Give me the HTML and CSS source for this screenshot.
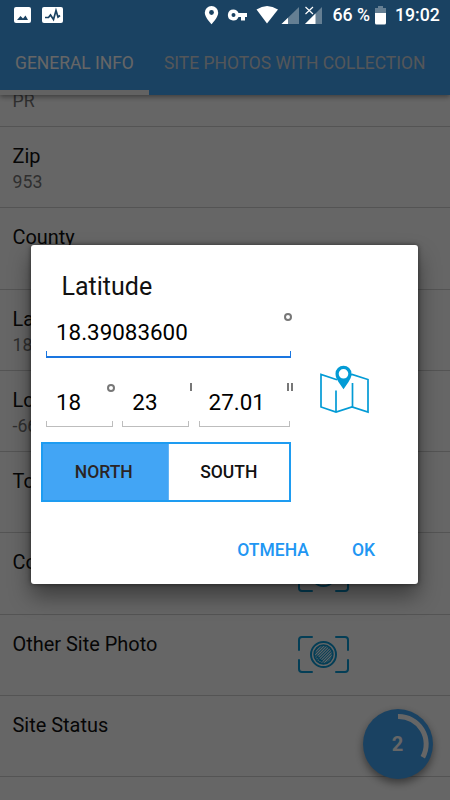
FILE: index.html
```html
<!DOCTYPE html>
<html lang="en">
<head>
<meta charset="utf-8">
<title>General info</title>
<link rel="stylesheet" href="styles.css">
</head>
<body>
<div class="screen">
  <header class="appbar">
    <nav class="tabs">
      <div class="tab active"><span>GENERAL INFO</span></div>
      <div class="tab"><span>SITE PHOTOS WITH COLLECTION</span></div>
    </nav>
  </header>
  <main class="list">
    <section class="row first"><p>PR</p></section>
    <section class="row"><h3>Zip</h3><p>953</p></section>
    <section class="row"><h3>County</h3></section>
    <section class="row"><h3>La</h3><p>18</p></section>
    <section class="row"><h3>Lo</h3><p>-66</p></section>
    <section class="row"><h3>To</h3></section>
    <section class="row photo"><h3>Co</h3>
      <svg class="camera" viewBox="0 0 52 38"><use href="#cam"/></svg></section>
    <section class="row photo"><h3>Other Site Photo</h3>
      <svg class="camera" viewBox="0 0 52 38">
        <defs><pattern id="hatch" width="2" height="2" patternUnits="userSpaceOnUse" patternTransform="rotate(45)"><path d="M.5 0V2" stroke="#0a9bd8" stroke-width="1"/></pattern></defs>
        <g id="cam" fill="none" stroke="#0a9bd8" stroke-width="2" stroke-linecap="round">
          <path d="M1 14V4q0-3 3-3H14M38 1H47q3 0 3 3V14M50 24V33q0 3-3 3H38M14 36H4q-3 0-3-3V24"/>
          <circle cx="25.5" cy="18.5" r="12.5"/>
          <circle cx="25.5" cy="18.5" r="9.3" fill="url(#hatch)" stroke-width="1.8"/>
          <path d="M19 20q2 4 5 5" stroke-width="1.5"/>
        </g>
      </svg></section>
    <section class="row"><h3>Site Status</h3></section>
    <section class="row last"><h3>Structure Type</h3></section>
  </main>
  <div class="fab"><span>2</span>
    <svg viewBox="0 0 70 70"><path d="M35 7.5A27.5 27.5 0 0 1 59.800 48.200" fill="none" stroke="#fff" stroke-width="5"/></svg>
  </div>
  <div class="scrim"></div>

  <div class="status">
    <svg viewBox="0 0 450 30">
      <g fill="#fff">
        <rect x="14" y="7" width="17" height="16" rx="2"/>
        <rect x="42" y="7" width="21" height="16" rx="2"/>
        <path d="M211.500 6a6.700 6.700 0 0 0-6.700 6.700c0 4.700 6.700 11.500 6.700 11.500s6.700-6.800 6.700-11.500A6.700 6.700 0 0 0 211.500 6Z"/>
        <path fill-rule="evenodd" d="M233.500 9.500a5.500 5.500 0 1 0 5 7.500h2.500v3.500h4V17h2v-4h-8.500a5.500 5.500 0 0 0-5-3.500Zm0 3.500a2 2 0 1 1 0 4 2 2 0 0 1 0-4Z"/>
        <path d="M256.500 9.500q10.500-7 21.500 0L267 23.500Z"/>
      </g>
      <path d="M17 20 20.500 16 23 18.500 25.500 15.500 28 20Z" fill="#1a4262"/>
      <path d="M45 17.500H48.500L50.500 15 53.500 19.500 56 10.500 58 17 60 15.500" fill="none" stroke="#1a4262" stroke-width="1.700"/>
      <circle cx="211.500" cy="12.500" r="2.400" fill="#1a4262"/>
      <path d="M281.500 24 299 7V24Z" fill="#657f93"/>
      <path d="M281.500 24 288 17.700V24Z" fill="#fff"/>
      <path d="M305 24 322 7V24Z" fill="#657f93"/>
      <path d="M305 24 315.500 13.500V24Z" fill="#fff"/>
      <path d="M305.500 7 313 14M313 7 305.500 14" stroke="#fff" stroke-width="1.200"/>
      <path d="M378 6h5v2h3v6h-11V8h3Z" fill="#657f93"/>
      <path d="M375 13h11v10q0 1.500-1.500 1.500h-8Q375 24.500 375 23Z" fill="#fff"/>
    </svg>
    <span class="battery">66 %</span>
    <span class="clock">19:02</span>
  </div>

  <div class="dialog">
    <h2>Latitude</h2>
    <div class="body">
      <div class="coords">
        <div class="field focus"><span class="decimal">18.39083600</span><i class="deg"></i></div>
        <div class="dms">
          <div class="field"><span>18</span><i class="deg"></i></div>
          <div class="field"><span>23</span><i class="prime"></i></div>
          <div class="field"><span>27.01</span><i class="prime"></i><i class="prime second"></i></div>
        </div>
        <div class="toggle"><div class="on"><span>NORTH</span></div><div><span>SOUTH</span></div></div>
      </div>
      <svg class="map" viewBox="0 0 52 50">
        <g fill="none" stroke="#039bd5" stroke-width="1.700">
          <path d="M18 14.700 2 9.500V42L17 47 33 42 49 47V14.500L33 9.500 31 10"/>
          <path d="M17 25.500V47M33.500 18V42"/>
        </g>
        <path fill="#039bd5" fill-rule="evenodd" d="M24.500.700a8 8 0 0 0-8 8c0 3.500 1.500 5.500 3 8.300l5 7.300 5-7.300c1.500-2.800 3-4.800 3-8.300a8 8 0 0 0-8-8Zm0 3.300a4.800 4.800 0 1 1 0 9.600 4.800 4.800 0 0 1 0-9.600Z"/>
      </svg>
    </div>
    <div class="actions"><span class="cancel">ОТМЕНА</span><span class="ok">OK</span></div>
  </div>
</div>
</body>
</html>
```
FILE: styles.css
```css
* { box-sizing: border-box; }
body { margin: 0; font-family: Roboto, "Liberation Sans", sans-serif; }
h2, h3, p { margin: 0; font-weight: 400; white-space: nowrap; }
svg { display: block; }
.screen { position: relative; width: 450px; height: 800px; overflow: hidden; background: #fff; }

.appbar { position: relative; height: 95px; padding-top: 31px; background: #42a5f5; box-shadow: 0 2px 5px rgba(0,0,0,.4); z-index: 1; }
.tabs { display: flex; height: 64px; }
.tab { flex: 1; line-height: 64px; padding-left: 15px; font-size: 17.450px; color: #d2d8de; white-space: nowrap; }
.tab span { display: block; }
.tab:first-child { flex: 0 0 149px; }
.tab.active { color: #fff; border-bottom: 5px solid #f5f5f5; }

.list { display: flex; flex-direction: column; }
.row { height: 81.250px; flex: none; padding: 17px 13px 0 12.500px; border-bottom: 1px solid #d2d2d2; }
.row.first { height: 32px; padding-top: 0; }
.row.first p { margin-top: -5px; }
.row.last { padding-top: 19px; }
.row h3 { font-size: 19.950px; line-height: 24px; color: #111; }
.row p { font-size: 17.700px; line-height: 22px; margin-top: 3px; color: #777; }
.row.photo { display: flex; justify-content: space-between; padding-right: 100px; }
.camera { width: 52px; height: 38px; margin-top: 4.500px; }

.fab { position: absolute; left: 362.500px; top: 708.500px; width: 70px; height: 70px; border-radius: 50%; background: #42a5f5; box-shadow: 0 4px 8px rgba(0,0,0,.45); color: #fff; z-index: 2; }
.fab span { display: block; text-align: center; line-height: 71px; font-size: 20px; font-weight: 700; }
.fab svg { position: absolute; inset: 0; }
.scrim { position: absolute; inset: 0; background: rgba(0,0,0,.6); z-index: 3; }

.status { position: absolute; left: 0; top: 0; width: 450px; height: 31px; z-index: 4; display: flex; justify-content: flex-end; padding-right: 10px; color: #fff; font-size: 17.700px; font-weight: 500; line-height: 31px; }
.status svg { position: absolute; left: 0; top: 0; width: 450px; height: 30px; }
.battery { width: 62.500px; }
.clock { width: 45px; white-space: nowrap; }

.dialog { position: absolute; left: 31px; top: 245px; width: 387px; height: 339px; background: #fff; border-radius: 3px; z-index: 5; box-shadow: 0 12px 22px rgba(0,0,0,.42), 0 0 5px rgba(0,0,0,.5); padding: 28px 0 0 10px; }
.dialog h2 { font-size: 25px; line-height: 28px; margin-left: 20.500px; color: #111; }
.body { display: flex; }
.coords { width: 250px; }
.field { position: relative; height: 55px; padding-left: 10px; font-size: 22.400px; line-height: 60px; color: #000; }
.field span { display: block; width: max-content; }
.field::after { content: ""; position: absolute; left: 0; right: 0; bottom: 0; height: 5px; border: 1px solid #bdbdbd; border-top: 0; }
.field.focus { margin: 2px 0 0 5px; width: 245px; height: 55px; line-height: 59px; }
.focus::after { border-width: 0 1px 2px; border-color: #1a76e0; }
.deg { position: absolute; right: -2px; top: 12px; width: 8px; height: 8px; border: 2px solid #777; border-radius: 50%; }
.focus .deg { right: -1px; top: 10px; }
.dms { display: grid; grid-template-columns: 67px 67px 91.500px; gap: 9.300px; margin: 14px 0 0 5px; }
.prime { position: absolute; right: -3px; top: 11px; width: 2px; height: 8px; background: #777; }
.prime.second { right: 1px; }
.toggle { display: flex; height: 60px; margin-top: 15px; border: 2px solid #1e9cf1; font-size: 17.500px; font-weight: 500; line-height: 57px; color: #111; }
.toggle div { flex: 1; display: flex; justify-content: center; }
.toggle .on { background: #42a5f5; flex: 0 0 125.500px; border-right: 1px solid #64b5f6; color: #2b2424; padding-right: 3px; }
.map { width: 52px; height: 50px; margin: 64px 0 0 28px; }
.actions { display: flex; justify-content: flex-end; gap: 43px; padding-right: 43px; margin-top: 37px; color: #2196f3; font-size: 17.500px; font-weight: 500; line-height: 22px; }
```
